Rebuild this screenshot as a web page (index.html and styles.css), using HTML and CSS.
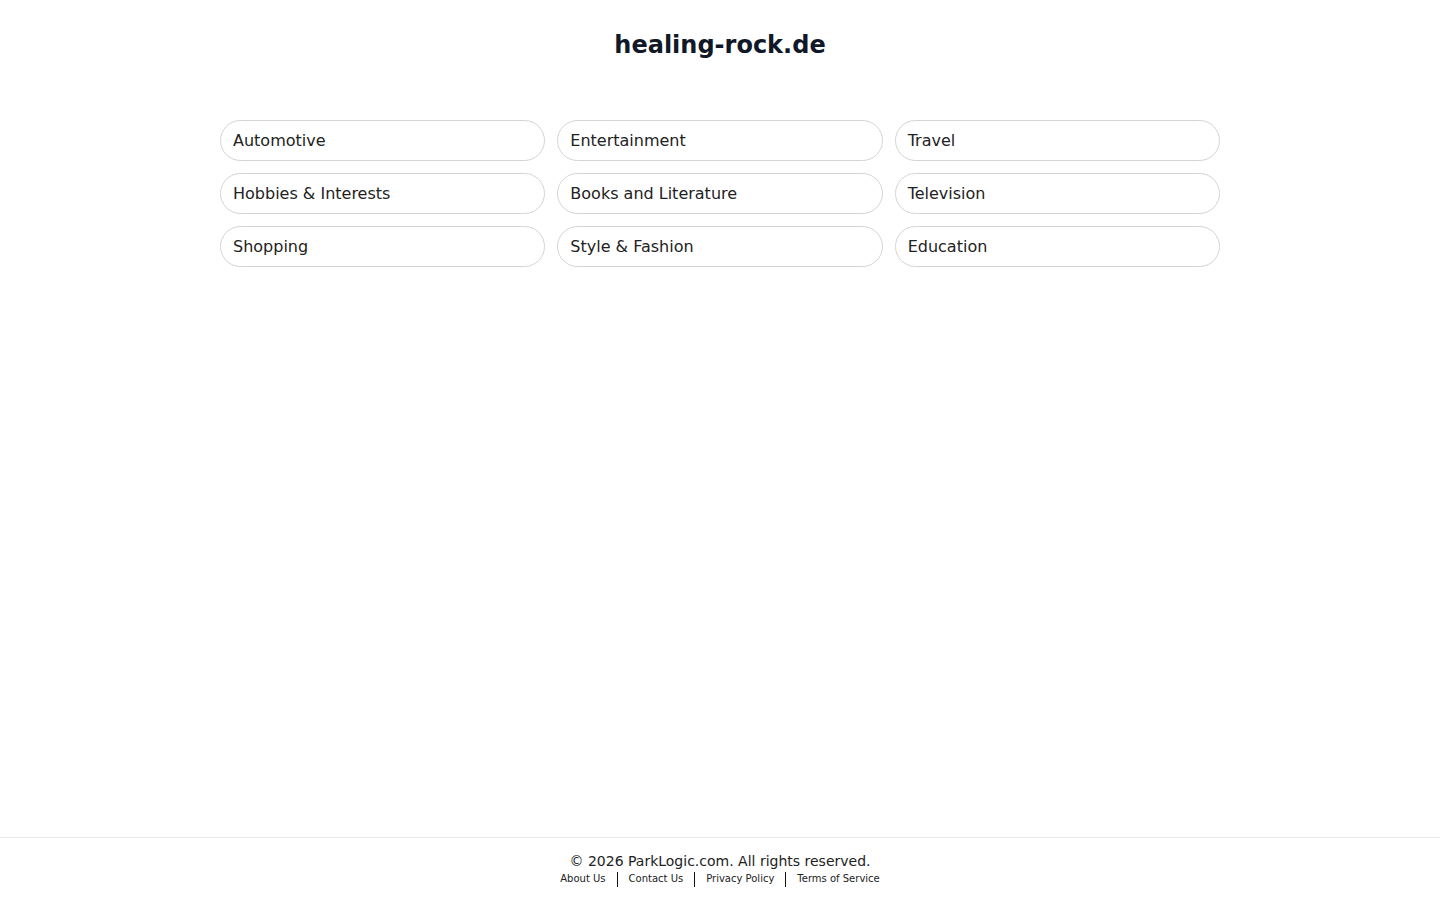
FILE: index.html
```html
<!DOCTYPE html>
<html lang="en">
<head>
<meta charset="utf-8">
<title>healing-rock.de</title>
<link rel="stylesheet" href="styles.css">
</head>
<body>
<div class="page">
  <header class="header">
    <h1 class="title">healing-rock.de</h1>
  </header>
  <main class="main">
    <div class="grid">
      <a class="pill" href="#">Automotive</a>
      <a class="pill" href="#">Entertainment</a>
      <a class="pill" href="#">Travel</a>
      <a class="pill" href="#">Hobbies &amp; Interests</a>
      <a class="pill" href="#">Books and Literature</a>
      <a class="pill" href="#">Television</a>
      <a class="pill" href="#">Shopping</a>
      <a class="pill" href="#">Style &amp; Fashion</a>
      <a class="pill" href="#">Education</a>
    </div>
  </main>
  <footer class="footer">
    <div class="copy">© 2026 ParkLogic.com. All rights reserved.</div>
    <nav class="links">
      <a href="#">About Us</a><span class="sep"></span><a href="#">Contact Us</a><span class="sep"></span><a href="#">Privacy Policy</a><span class="sep"></span><a href="#">Terms of Service</a>
    </nav>
  </footer>
</div>
</body>
</html>
```
FILE: styles.css
```css
* { box-sizing: border-box; }
html, body { margin: 0; padding: 0; background: #ffffff; }
body {
  font-family: "DejaVu Sans", Verdana, sans-serif;
  color: #1f2937;
}
.page {
  min-height: 100vh;
  display: flex;
  flex-direction: column;
}
.header {
  padding-top: 29px;
  text-align: center;
}
.title {
  margin: 0;
  font-size: 24px;
  line-height: 32px;
  font-weight: bold;
  color: #111827;
}
.main {
  flex: 1;
  padding-top: 59px;
}
.grid {
  width: 1000px;
  margin: 0 auto;
  display: grid;
  grid-template-columns: repeat(3, 1fr);
  gap: 12px;
}
.pill {
  display: flex;
  align-items: center;
  height: 41px;
  padding: 0 12px;
  border: 1px solid #d4d4d8;
  border-radius: 21px;
  font-size: 16px;
  color: #222222;
  text-decoration: none;
}
.footer {
  border-top: 1px solid #e5e7eb;
  padding: 13px 0 14px;
  text-align: center;
}
.copy {
  font-size: 14px;
  line-height: 20px;
  color: #222222;
}
.links {
  display: flex;
  justify-content: center;
  align-items: center;
  height: 15px;
  padding-top: 1px;
  font-size: 10px;
  line-height: 14px;
}
.links a {
  color: #222222;
  text-decoration: none;
}
.sep {
  display: inline-block;
  width: 1px;
  height: 15px;
  background: #111111;
  margin: 0 11px;
}
```
